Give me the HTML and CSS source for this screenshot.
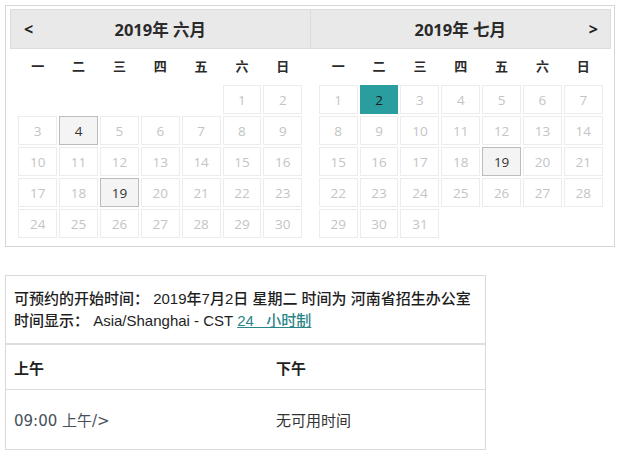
FILE: index.html
```html
<!DOCTYPE html>
<html lang="zh-CN">
<head>
<meta charset="utf-8">
<title>预约</title>
<link rel="stylesheet" href="styles.css">
</head>
<body>
<div class="page">
  <div class="cal">
    <div class="month">
      <div class="mhead"><span class="nav prev">&lt;</span><span class="title">2019年 六月</span></div>
      <div class="dnames"><span>一</span><span>二</span><span>三</span><span>四</span><span>五</span><span>六</span><span>日</span></div>
      <div class="days">
        <span class="blank"></span><span class="blank"></span><span class="blank"></span><span class="blank"></span><span class="blank"></span>
        <span class="d">1</span><span class="d">2</span>
        <span class="d">3</span><span class="d on">4</span><span class="d">5</span><span class="d">6</span><span class="d">7</span><span class="d">8</span><span class="d">9</span>
        <span class="d">10</span><span class="d">11</span><span class="d">12</span><span class="d">13</span><span class="d">14</span><span class="d">15</span><span class="d">16</span>
        <span class="d">17</span><span class="d">18</span><span class="d on">19</span><span class="d">20</span><span class="d">21</span><span class="d">22</span><span class="d">23</span>
        <span class="d">24</span><span class="d">25</span><span class="d">26</span><span class="d">27</span><span class="d">28</span><span class="d">29</span><span class="d">30</span>
      </div>
    </div>
    <div class="month">
      <div class="mhead"><span class="title">2019年 七月</span><span class="nav next">&gt;</span></div>
      <div class="dnames"><span>一</span><span>二</span><span>三</span><span>四</span><span>五</span><span>六</span><span>日</span></div>
      <div class="days">
        <span class="d">1</span><span class="d sel">2</span><span class="d">3</span><span class="d">4</span><span class="d">5</span><span class="d">6</span><span class="d">7</span>
        <span class="d">8</span><span class="d">9</span><span class="d">10</span><span class="d">11</span><span class="d">12</span><span class="d">13</span><span class="d">14</span>
        <span class="d">15</span><span class="d">16</span><span class="d">17</span><span class="d">18</span><span class="d on">19</span><span class="d">20</span><span class="d">21</span>
        <span class="d">22</span><span class="d">23</span><span class="d">24</span><span class="d">25</span><span class="d">26</span><span class="d">27</span><span class="d">28</span>
        <span class="d">29</span><span class="d">30</span><span class="d">31</span>
      </div>
    </div>
  </div>

  <div class="info">
    <div class="summary">
      <div class="line">可预约的开始时间： 2019年7月2日 星期二 时间为 河南省招生办公室</div>
      <div class="line">时间显示： Asia/Shanghai - CST <a class="fmt" href="#">24&nbsp;&nbsp; 小时制</a></div>
    </div>
    <div class="slots">
      <div class="srow shead"><div class="cell">上午</div><div class="cell">下午</div></div>
      <div class="srow sbody"><div class="cell time">09:00 上午/&gt;</div><div class="cell none">无可用时间</div></div>
    </div>
  </div>
</div>
</body>
</html>
```

FILE: styles.css
```css
* { box-sizing: border-box; }

body {
  margin: 0;
  background: #fff;
  font-family: "Open Sans", "Noto Sans CJK SC", sans-serif;
  color: #333;
}

.page {
  padding: 5px 0 0 5px;
}

.cal {
  width: 610px;
  border: 1px solid #d6d6d6;
  padding: 3px 3px 8px 4px;
  display: flex;
}

.month {
  flex: 1;
}

.mhead {
  height: 40px;
  background: #e9e9e9;
  border: 1px solid #dcdcdc;
  display: flex;
  align-items: center;
  justify-content: center;
  position: relative;
}

.month + .month .mhead {
  border-left: 0;
}

.title {
  font-size: 16.5px;
  font-weight: bold;
  color: #2a2a2a;
}

.nav {
  position: absolute;
  top: 8px;
  font-size: 16px;
  font-weight: bold;
  color: #222;
}

.prev { left: 13px; }
.next { right: 12px; }

.dnames,
.days {
  width: 284px;
  margin: 0 auto;
  display: grid;
  grid-template-columns: repeat(7, 1fr);
  column-gap: 2px;
}

.dnames {
  margin-top: 3px;
  margin-bottom: 5px;
}

.dnames span {
  height: 28px;
  line-height: 28px;
  text-align: center;
  font-size: 13px;
  font-weight: bold;
  color: #2a2a2a;
}

.days {
  row-gap: 2px;
}

.days span {
  height: 29px;
}

.d {
  border: 1px solid #ececec;
  display: flex;
  align-items: center;
  justify-content: center;
  font-size: 13.5px;
  color: #c4c4c4;
}

.d.on {
  background: #f4f4f4;
  border-color: #bcbcbc;
  color: #333;
}

.d.sel {
  background: #2a9d9f;
  border-color: #2a9d9f;
  color: #1d1d1d;
}

.info {
  margin-top: 28px;
  width: 481px;
  border: 1px solid #d9d9d9;
  font-family: "Liberation Sans", "Noto Sans CJK SC", sans-serif;
}

.summary {
  padding: 12px 8px 11px 8px;
  border-bottom: 2px solid #dedede;
}

.line {
  font-size: 15px;
  line-height: 22px;
  font-weight: 500;
  color: #1e1e1e;
  white-space: nowrap;
}

.fmt {
  color: #2a8588;
  text-decoration: underline;
}

.srow {
  display: grid;
  grid-template-columns: 262px 1fr;
}

.cell {
  padding-left: 8px;
  display: flex;
  align-items: center;
}

.shead {
  height: 45px;
  border-bottom: 1px solid #dedede;
}

.shead .cell {
  font-size: 15px;
  font-weight: bold;
  color: #222;
}

.sbody {
  height: 59px;
}

.sbody .cell {
  font-size: 15px;
}

.time {
  font-family: "DejaVu Sans", "Noto Sans CJK SC", sans-serif;
  color: #47505a;
}

.none { color: #333; }
```
